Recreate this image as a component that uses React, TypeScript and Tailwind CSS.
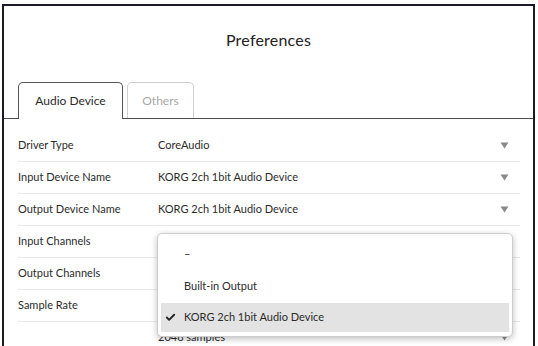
import { Check } from 'lucide-react';

const rows = [
  { label: 'Driver Type', value: 'CoreAudio' },
  { label: 'Input Device Name', value: 'KORG 2ch 1bit Audio Device' },
  { label: 'Output Device Name', value: 'KORG 2ch 1bit Audio Device' },
  { label: 'Input Channels', value: '2' },
  { label: 'Output Channels', value: '2' },
  { label: 'Sample Rate', value: '44100 Hz' },
  { label: '', value: '2048 samples' },
];

const options = ['–', 'Built-in Output', 'KORG 2ch 1bit Audio Device'];

function Arrow() {
  return (
    <svg width="9" height="7" viewBox="0 0 9 7" className="shrink-0">
      <path d="M0.5 0.5 H8.5 L4.5 6.5 Z" fill="#8a8a8a" />
    </svg>
  );
}

export default function App() {
  return (
    <div className="w-[538px] h-[346px] overflow-hidden bg-white pt-1 pl-[2px] pr-[3px] font-['Lato','Noto_Sans',sans-serif] text-[#2b2b2b]">
      <div className="relative h-[400px] border-t-2 border-l-2 border-r-2 border-[#1b1b28] bg-white">
        {/* title */}
        <div className="h-[76px] pt-[24px] text-center text-[16px] leading-[20px] tracking-[0.2px] text-[#222]">
          Preferences
        </div>

        {/* tabs */}
        <div className="flex items-end h-[37px] pl-[14px] border-b border-[#4a4a4a]">
          <div className="relative -mb-px flex h-[37px] w-[105px] items-center justify-center rounded-t-[5px] border border-b-0 border-[#555] bg-white text-[12px]">
            Audio Device
          </div>
          <div className="ml-[4px] flex h-[36px] w-[67px] items-center justify-center rounded-t-[5px] border border-b-0 border-[#cfcfcf] text-[12px] text-[#a8a8a8]">
            Others
          </div>
        </div>

        {/* rows */}
        <div className="mt-[11px] ml-[14px] w-[502px]">
          {rows.map((r) => (
            <div key={r.value + r.label} className="flex h-[32px] items-center border-b border-[#e8e8e8] pr-[11px] text-[11px]">
              <div className="w-[140px] shrink-0">{r.label}</div>
              <div className="flex-1">{r.value}</div>
              <Arrow />
            </div>
          ))}
        </div>

        {/* open dropdown */}
        <div className="absolute left-[153px] top-[227px] w-[356px] h-[104px] rounded-[5px] border border-[#cdcdcd] bg-white px-[3px] pt-[4px] shadow-[0_2px_6px_rgba(0,0,0,0.25)] text-[11px]">
          {options.map((o, i) => {
            const sel = i === options.length - 1;
            return (
              <div
                key={o}
                className={`flex items-center ${sel ? 'mt-[1px] h-[29px] bg-[#e3e3e3]' : 'h-[32px]'}`}
              >
                <div className="w-[23px] shrink-0 pl-[4px]">
                  {sel && <Check size={11} strokeWidth={4} className="text-[#222]" />}
                </div>
                <span>{o}</span>
              </div>
            );
          })}
        </div>
      </div>
    </div>
  );
}
